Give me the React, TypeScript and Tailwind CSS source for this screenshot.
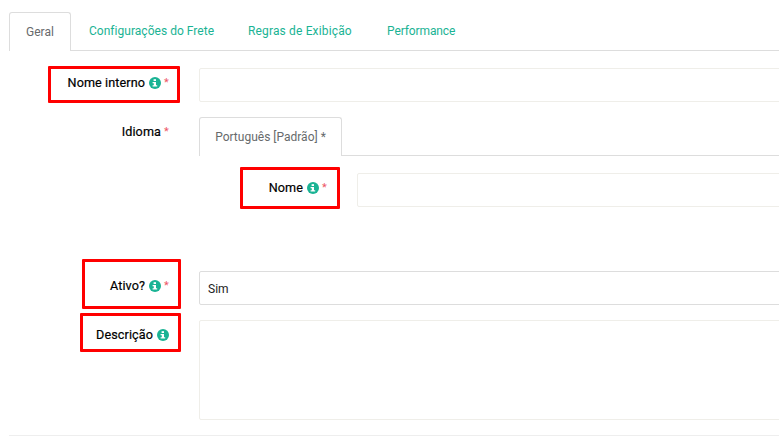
function InfoIcon() {
  return (
    <svg width="12" height="12" viewBox="0 0 12 12" className="shrink-0 ml-[4px]">
      <circle cx="6" cy="6" r="6" fill="#1ab394" />
      <rect x="4.6" y="2.2" width="2.4" height="1.8" fill="#fff" />
      <path d="M3.6 5h3.4v3.2h1.2v1.3H3.6V8.2h1.2V6.3H3.6z" fill="#fff" />
    </svg>
  );
}

function Star() {
  return <span className="w-[5px] ml-[3px] text-[#ed5565] text-[11px] font-normal [-webkit-text-stroke:0]">*</span>;
}

function FieldLabel({ text, info, required }: { text: string; info?: boolean; required?: boolean }) {
  return (
    <div className="flex items-center justify-end text-[12.6px] tracking-[0.1px] leading-[18px] font-normal text-black [-webkit-text-stroke:0.2px_#000]">
      <span>{text}</span>
      {info && <InfoIcon />}
      {required && <Star />}
    </div>
  );
}

function Annotated({ className }: { className: string }) {
  return <div className={"absolute border-[3px] border-[#ff0000] rounded-[1px] " + className} />;
}

export default function App() {
  return (
    <div className="relative w-[779px] h-[436px] overflow-hidden bg-white font-['Roboto','Liberation_Sans',sans-serif]">
      {/* Abas */}
      <div className="pl-[9px] pt-[12px]">
        <div className="flex h-[39px] border-b border-[#dddddd] text-[12px]">
          <div className="h-[39px] w-[62px] flex items-center justify-center border border-b-0 border-[#dddddd] rounded-t-[3px] bg-white text-[#676a6c]">
            Geral
          </div>
          <div className="flex items-center ml-[18px] text-[#1ab394] pb-[1px]">
            <span className="w-[159px] tracking-[0.03px]">Configurações do Frete</span>
            <span className="w-[139px] tracking-[0.15px]">Regras de Exibição</span>
            <span className="tracking-[-0.1px]">Performance</span>
          </div>
        </div>
      </div>

      {/* Nome interno */}
      <div className="flex mt-[17px]">
        <div className="w-[169px] shrink-0 pt-[6px]">
          <FieldLabel text="Nome interno" info required />
        </div>
        <div className="ml-[30px] w-[640px] shrink-0 h-[34px] border border-[#efeee9] rounded-[2px] bg-white" />
      </div>

      {/* Idioma */}
      <div className="flex mt-[15px]">
        <div className="w-[169px] shrink-0 pt-[6px]">
          <FieldLabel text="Idioma" required />
        </div>
        <div className="ml-[30px] w-[640px] shrink-0">
          <div className="flex h-[39px] border-b border-[#dddddd]">
            <div className="h-[39px] w-[143px] flex items-center justify-center border border-b-0 border-[#dddddd] rounded-t-[3px] bg-white text-[12px] text-[#676a6c]">
              Português [Padrão] *
            </div>
          </div>
          <div className="flex mt-[17px]">
            <div className="w-[128px] shrink-0 pt-[6px]">
              <FieldLabel text="Nome" info required />
            </div>
            <div className="ml-[30px] flex-1 h-[34px] border border-[#efeee9] rounded-[2px] bg-white" />
          </div>
        </div>
      </div>

      {/* Ativo */}
      <div className="flex mt-[64px]">
        <div className="w-[169px] shrink-0 pt-[6px]">
          <FieldLabel text="Ativo?" info required />
        </div>
        <div className="ml-[30px] w-[640px] shrink-0 h-[34px] flex items-center px-[8px] pt-[1px] border border-[#dddddd] rounded-[2px] bg-white text-[12px] text-[#222]">
          Sim
        </div>
      </div>

      {/* Descrição */}
      <div className="flex mt-[15px]">
        <div className="w-[169px] shrink-0 pt-[6px]">
          <FieldLabel text="Descrição" info />
        </div>
        <div className="ml-[30px] w-[640px] shrink-0 h-[100px] border border-[#efeee9] rounded-[2px] bg-white" />
      </div>

      <div className="ml-[9px] mt-[15px] h-px bg-[#eeeeee]" />

      {/* Marcações vermelhas */}
      <Annotated className="left-[48px] top-[66px] w-[132px] h-[37px]" />
      <Annotated className="left-[240px] top-[167px] w-[100px] h-[42px]" />
      <Annotated className="left-[82px] top-[259px] w-[99px] h-[50px]" />
      <Annotated className="left-[80px] top-[313px] w-[101px] h-[39px]" />
    </div>
  );
}
